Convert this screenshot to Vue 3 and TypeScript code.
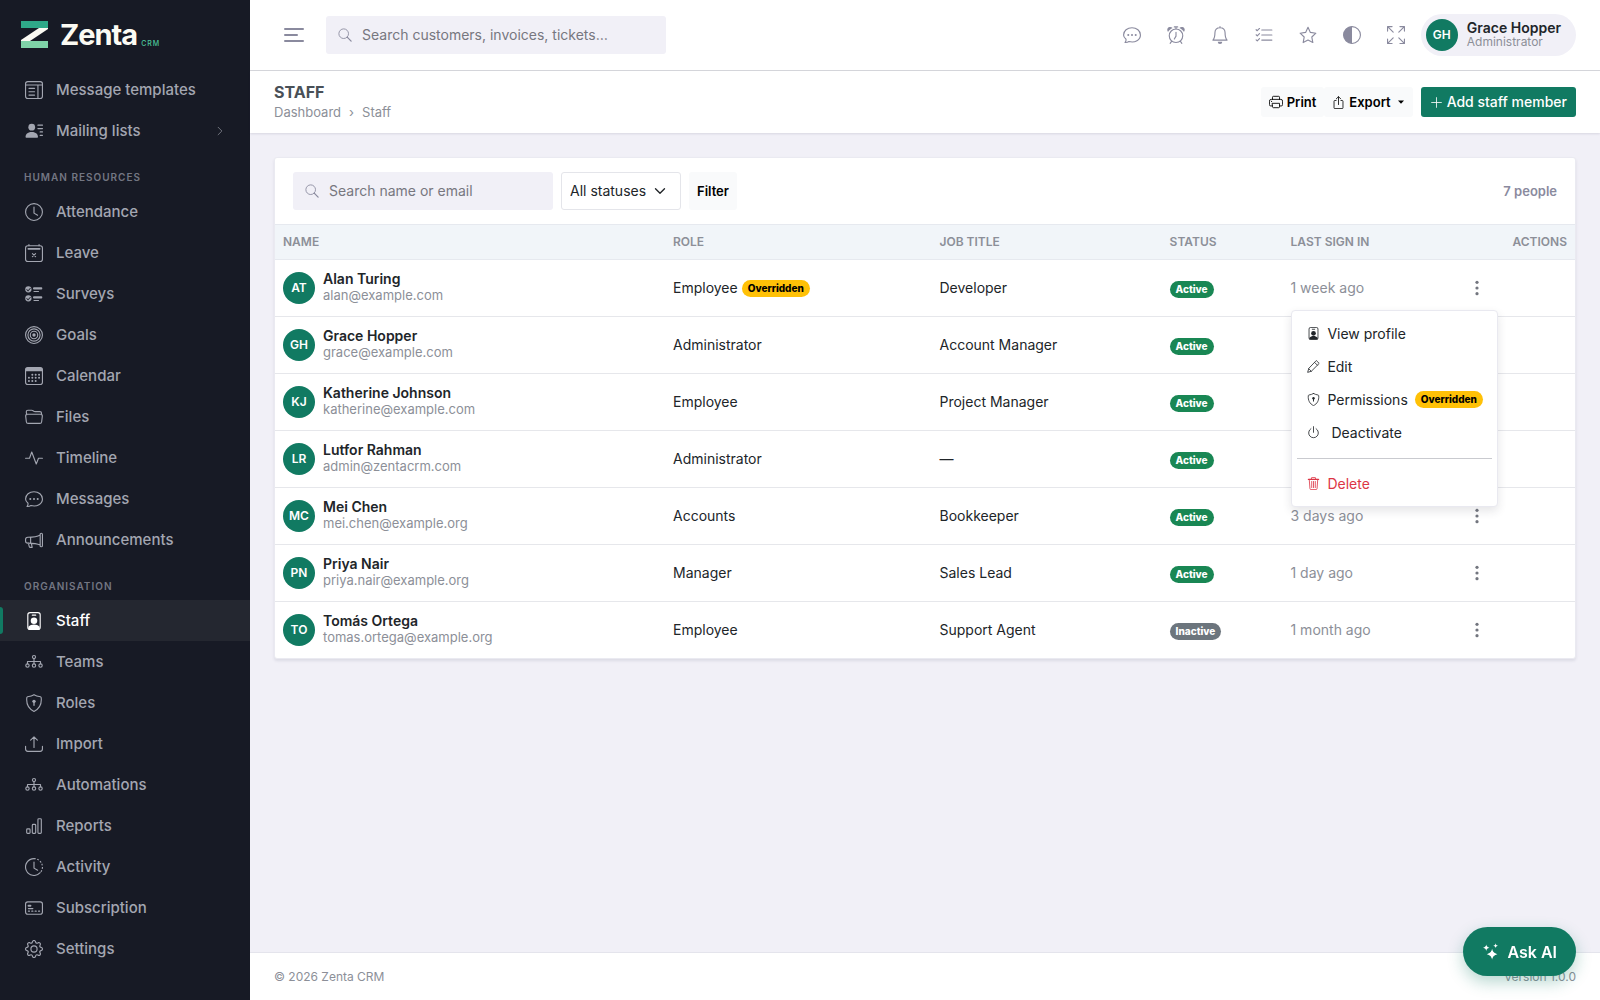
<script setup lang="ts">
import { h, ref } from 'vue'

const line = (d: string, width = 1) =>
  `<path d="${d}" fill="none" stroke="currentColor" stroke-width="${width}" stroke-linecap="round" stroke-linejoin="round"/>`
const fill = (d: string) => `<path d="${d}" fill="currentColor" fill-rule="evenodd"/>`
const ring = (cx: number, cy: number, r: number, width = 1) =>
  `<circle cx="${cx}" cy="${cy}" r="${r}" fill="none" stroke="currentColor" stroke-width="${width}"/>`
const dot = (cx: number, cy: number, r: number) => `<circle cx="${cx}" cy="${cy}" r="${r}" fill="currentColor"/>`
const box = (x: number, y: number, w: number, hgt: number, r: number) =>
  `<rect x="${x}" y="${y}" width="${w}" height="${hgt}" rx="${r}" fill="none" stroke="currentColor"/>`

const chart = ring(8, 3.6, 1.4) + ring(2.2, 11.2, 1.5) + ring(8, 11.2, 1.5) + ring(13.8, 11.2, 1.5) +
  line('M8 5v4.5M2.2 9.5v-2h11.6v2')

const icons: Record<string, string> = {
  template: box(0.5, 0.5, 15, 15, 2) + line('M.5 3.5h15M11.5 3.5v12M3.5 6.5h5M3.5 9.5h5M3.5 12.5h5'),
  mailing: dot(6, 4.6, 3) + fill('M1.5 14c-.8 0-1-.5-1-1 0-2 1.600-4.200 5.500-4.200s5.500 2.200 5.500 4.200c0 .5-.2 1-1 1z') +
    line('M11.500 2.800h4M11.500 5.800h4M13.500 8.800h2M13.500 11.800h2', 1.1),
  clock: ring(8, 8, 7.5) + line('M8 3.500v5.500l3.200 1.900'),
  leave: box(0.5, 1.5, 15, 14, 2) + line('M3.500.5v1M12.500.5v1') + line('M3 4.300h10', 1.6) + line('M6.600 8.500l2.800 2.800M9.400 8.500l-2.800 2.800'),
  surveys: fill('M3 1a2.800 2.800 0 1 0 0 5.600A2.800 2.800 0 0 0 3 1zM1.600 3.500l1.100 1.200 2-2.300.5.500-2.500 2.800-1.600-1.600z') +
    fill('M3 9a2.800 2.800 0 1 0 0 5.600A2.800 2.800 0 0 0 3 9zM1.600 11.500l1.100 1.200 2-2.300.5.500-2.500 2.800-1.600-1.600z') +
    line('M8 3h6.500M8 11h6.500', 1.8) + line('M8 5.800h4M8 13.800h4'),
  goals: ring(8, 8, 7.5) + ring(8, 8, 5.4) + ring(8, 8, 3.3) + dot(8, 8, 1.5),
  calendar: box(0.5, 0.5, 15, 15, 2) + fill('M.5 2.500a2 2 0 0 1 2-2h11a2 2 0 0 1 2 2v1.200H.5z') +
    [[6.500, 6.800], [9.500, 6.800], [12.500, 6.800], [3.500, 9.600], [6.500, 9.600], [9.500, 9.600], [12.500, 9.600], [3.500, 12.400], [6.500, 12.400], [9.500, 12.400]]
      .map(([x, y]) => dot(x, y, 0.9)).join(''),
  folder: line('M1.500 6L1.100 3.500c0-1 .6-1.500 1.500-1.500h3.300c1.400 0 1.700 1.200 3 1.200h4.300c1 0 1.500.7 1.500 1.500L14.500 6M2.200 5.500h11.600c1 0 1.700.7 1.600 1.700l-.6 5c-.1.900-.7 1.500-1.600 1.500H2.800c-.9 0-1.500-.6-1.600-1.500l-.6-5c-.1-1 .6-1.700 1.600-1.700z'),
  pulse: line('M.5 8.200h3.500L6 2.700l4 10.600 2-5.100h3.500'),
  chat: line('M2.700 11.800c.2 1-.2 2-.9 2.900 1.600.1 2.800-.4 3.500-.9 5.400 1.500 10.200-1.500 10.200-5.800 0-3.700-3.400-6.500-7.500-6.500S.5 4.300.5 8c0 1.500.8 2.700 2.200 3.800z') +
    dot(4.7, 8, 0.9) + dot(8, 8, 0.9) + dot(11.3, 8, 0.9),
  megaphone: line('M13.500 2.500v11M13.500 3c0-1.300 2-1.300 2 0v10c0 1.300-2 1.300-2 0M13.500 3.500C11 5 8.500 5.500 2.500 5.600c-1.200 0-2 .8-2 1.900v1.400c0 1.100.8 1.900 2 1.900 6 .1 8.500.6 11 1.700M5 5.600v5M3 10.800l.8 3c.1.500.5.700 1 .7h1.600L5.600 11'),
  badge: `<rect x="2.500" y=".5" width="11" height="15" rx="2" fill="none" stroke="currentColor"/>` + line('M6.500 2.800h3') +
    dot(8, 7.8, 2.9) + fill('M3 15.500v-2.300c1.400-1.600 3-2.200 5-2.200s3.600.6 5 2.200v2.300z'),
  chart,
  shield: line('M8 .6c-1.500.9-3.500 1.500-5.700 1.900-.4.100-.6.400-.7.800C1 9 3.500 13.400 8 15.500c4.500-2.100 7-6.500 6.400-12.200-.1-.4-.3-.7-.7-.8C11.500 2.100 9.500 1.500 8 .6z') +
    dot(8, 6.500, 1.5) + line('M8 7v3', 1.2),
  upload: line('M.5 10v2.500a2 2 0 0 0 2 2h11a2 2 0 0 0 2-2V10M8 11V1.800M5 4.600l3-3 3 3'),
  reports: box(1.500, 10.500, 3, 4, 0.8) + box(6.500, 6.500, 3, 8, 0.8) + box(11.500, 1.500, 3, 13, 0.8),
  history: line('M8 .5a7.500 7.500 0 1 0 5.500 12.600M8 3.500v5.500l3.200 1.900') +
    `<path d="M8 .5a7.500 7.500 0 0 1 5.500 12.600" fill="none" stroke="currentColor" stroke-dasharray="1.600 1.300"/>`,
  card: box(0.5, 2.5, 15, 11, 2) + line('M3 10.800h1M6 10.800h1M9 10.800h1M12 10.800h1M3 8.500h4') + line('M3.200 6h1.600', 1.8),
  gear: fill('M8 4.754a3.246 3.246 0 1 0 0 6.492 3.246 3.246 0 0 0 0-6.492zM5.754 8a2.246 2.246 0 1 1 4.492 0 2.246 2.246 0 0 1-4.492 0z') +
    fill('M9.796 1.343c-.527-1.790-3.065-1.790-3.592 0l-.094.319a.873.873 0 0 1-1.255.520l-.292-.160c-1.640-.892-3.433.902-2.540 2.541l.159.292a.873.873 0 0 1-.520 1.255l-.319.094c-1.790.527-1.790 3.065 0 3.592l.319.094a.873.873 0 0 1 .520 1.255l-.160.292c-.892 1.640.901 3.434 2.541 2.540l.292-.159a.873.873 0 0 1 1.255.520l.094.319c.527 1.790 3.065 1.790 3.592 0l.094-.319a.873.873 0 0 1 1.255-.520l.292.160c1.640.893 3.434-.902 2.540-2.541l-.159-.292a.873.873 0 0 1 .520-1.255l.319-.094c1.790-.527 1.790-3.065 0-3.592l-.319-.094a.873.873 0 0 1-.520-1.255l.160-.292c.893-1.640-.902-3.433-2.541-2.540l-.292.159a.873.873 0 0 1-1.255-.520l-.094-.319zm-2.633.283c.246-.835 1.428-.835 1.674 0l.094.319a1.873 1.873 0 0 0 2.693 1.115l.291-.160c.764-.415 1.600.420 1.184 1.185l-.159.292a1.873 1.873 0 0 0 1.116 2.692l.318.094c.835.246.835 1.428 0 1.674l-.319.094a1.873 1.873 0 0 0-1.115 2.693l.160.291c.415.764-.420 1.600-1.185 1.184l-.291-.159a1.873 1.873 0 0 0-2.693 1.116l-.094.318c-.246.835-1.428.835-1.674 0l-.094-.319a1.873 1.873 0 0 0-2.692-1.115l-.292.160c-.764.415-1.600-.420-1.184-1.185l.159-.291A1.873 1.873 0 0 0 1.945 8.930l-.319-.094c-.835-.246-.835-1.428 0-1.674l.319-.094A1.873 1.873 0 0 0 3.060 4.377l-.160-.292c-.415-.764.420-1.600 1.185-1.184l.292.159a1.873 1.873 0 0 0 2.692-1.115l.094-.319z'),
  search: ring(6.5, 6.5, 5.5) + line('M10.500 10.500l4.500 4.500', 1.4),
  alarm: ring(8, 8.700, 6) + line('M8 5.500v3.500l-1.500 2.600M6.500.8h3M8 .8v1.700M4.200 13.500l-1.400 1.900M11.800 13.500l1.400 1.900') +
    fill('M.9 5.400C-.4 3.500.3 1.300 2.300.9c1.100-.2 2 .2 2.700.9C3.200 2.500 1.700 3.800.9 5.400zM15.100 5.400c1.300-1.900.6-4.100-1.400-4.500-1.100-.2-2 .2-2.700.9 1.800.7 3.300 2 4.100 3.600z'),
  bell: line('M8 1.500c-2.800 0-4.500 2-4.500 4.500 0 3.500-.8 5.500-1.800 6.500h12.600c-1-1-1.800-3-1.800-6.500 0-2.500-1.700-4.500-4.500-4.500zM8 .5v1') + fill('M6 14h4a2 2 0 0 1-4 0z'),
  tasks: line('M6 3.500h9M6 8h9M6 12.500h9M1 3.300l1 .9 2-2M1 7.800l1 .9 2-2M1 12.300l1 .9 2-2'),
  star: line('M8 1.200l2.100 4.500 4.900.7-3.600 3.400.9 4.900L8 12.400l-4.300 2.300.9-4.900L1 6.400l4.900-.7z'),
  contrast: ring(8, 8, 7.5) + fill('M8 .5a7.500 7.500 0 0 0 0 15z'),
  expand: line('M.5 4.500v-4h4M.8.8l4.700 4.700M11.500.5h4v4M15.200.8l-4.700 4.700M.5 11.500v4h4M.8 15.200l4.700-4.700M11.500 15.500h4v-4M15.200 15.200l-4.700-4.700'),
  printer: line('M4 5V2.500a1 1 0 0 1 1-1h6a1 1 0 0 1 1 1V5M4 12.500H2a1.500 1.500 0 0 1-1.500-1.500V7A2 2 0 0 1 2.500 5h11a2 2 0 0 1 2 2v4a1.500 1.500 0 0 1-1.500 1.500h-2M4 9.500h8v4a1 1 0 0 1-1 1H5a1 1 0 0 1-1-1z') + dot(3, 7.3, 0.6),
  share: line('M5 5.500H3.500a1 1 0 0 0-1 1v8a1 1 0 0 0 1 1h9a1 1 0 0 0 1-1v-8a1 1 0 0 0-1-1H11M8 10.500V1M5.300 3.500L8 .8l2.700 2.700'),
  plus: line('M8 2v12M2 8h12'),
  caret: fill('M2 5h12l-6 6.500z'),
  down: line('M2 5l6 6 6-6', 1.8),
  right: line('M5 2l6 6-6 6'),
  dots: dot(8, 2.3, 1.6) + dot(8, 8, 1.6) + dot(8, 13.7, 1.6),
  pencil: line('M11.800 1l3.200 3.200L5.300 13.900.8 15.200l1.300-4.500zM9.600 3.200l3.200 3.200M2.200 10.800l3 3'),
  power: line('M8 .8v7M4.800 3.300a6 6 0 1 0 6.400 0'),
  trash: line('M1.500 3h13M2.800 3l.8 11.200c.1.700.5 1.300 1.200 1.300h6.400c.7 0 1.100-.6 1.200-1.300L13.200 3M5.500 2.800V1.200c0-.4.3-.7.700-.7h3.600c.4 0 .7.300.7.700v1.600M5.800 5.500v7.500M8 5.500v7.500M10.200 5.500v7.500') + line('M2 3h12', 1.6),
  sparkle: fill('M9.500 5.500c.5 3 1.800 4.200 5 5-3.200.8-4.500 2-5 5-.5-3-1.800-4.200-5-5 3.200-.8 4.500-2 5-5zM4 1.500c.3 1.800 1 2.500 3 3-2 .5-2.700 1.200-3 3-.3-1.800-1-2.500-3-3 2-.5 2.700-1.200 3-3zM12.800.2c.2 1.400.8 2 2.400 2.300-1.600.3-2.200.9-2.400 2.300-.2-1.400-.8-2-2.400-2.300 1.600-.3 2.200-.9 2.400-2.300z') +
    line('M9.500 8l.8 1.700 1.700.8-1.700.8-.8 1.700-.8-1.700-1.700-.8 1.700-.8z', 1.5),
}

const Icon = (props: { name: string; size?: number }) =>
  h('svg', {
    viewBox: '0 0 16 16',
    width: props.size ?? 18,
    height: props.size ?? 18,
    'aria-hidden': 'true',
    innerHTML: icons[props.name],
  })
Icon.props = ['name', 'size']

interface NavItem { label: string; icon: string; more?: boolean }
interface NavGroup { title: string; items: NavItem[] }

const nav: NavGroup[] = [
  {
    title: '',
    items: [
      { label: 'Message templates', icon: 'template' },
      { label: 'Mailing lists', icon: 'mailing', more: true },
    ],
  },
  {
    title: 'Human resources',
    items: [
      { label: 'Attendance', icon: 'clock' },
      { label: 'Leave', icon: 'leave' },
      { label: 'Surveys', icon: 'surveys' },
      { label: 'Goals', icon: 'goals' },
      { label: 'Calendar', icon: 'calendar' },
      { label: 'Files', icon: 'folder' },
      { label: 'Timeline', icon: 'pulse' },
      { label: 'Messages', icon: 'chat' },
      { label: 'Announcements', icon: 'megaphone' },
    ],
  },
  {
    title: 'Organisation',
    items: [
      { label: 'Staff', icon: 'badge' },
      { label: 'Teams', icon: 'chart' },
      { label: 'Roles', icon: 'shield' },
      { label: 'Import', icon: 'upload' },
      { label: 'Automations', icon: 'chart' },
      { label: 'Reports', icon: 'reports' },
      { label: 'Activity', icon: 'history' },
      { label: 'Subscription', icon: 'card' },
      { label: 'Settings', icon: 'gear' },
    ],
  },
]

const tools = [
  { icon: 'chat', label: 'Messages' },
  { icon: 'alarm', label: 'Reminders' },
  { icon: 'bell', label: 'Notifications' },
  { icon: 'tasks', label: 'Tasks' },
  { icon: 'star', label: 'Favourites' },
  { icon: 'contrast', label: 'Theme' },
  { icon: 'expand', label: 'Full screen' },
]

interface Person {
  initials: string
  name: string
  email: string
  role: string
  overridden?: boolean
  job: string
  active: boolean
  seen: string
}

const people: Person[] = [
  { initials: 'AT', name: 'Alan Turing', email: 'alan@example.com', role: 'Employee', overridden: true, job: 'Developer', active: true, seen: '1 week ago' },
  { initials: 'GH', name: 'Grace Hopper', email: 'grace@example.com', role: 'Administrator', job: 'Account Manager', active: true, seen: '' },
  { initials: 'KJ', name: 'Katherine Johnson', email: 'katherine@example.com', role: 'Employee', job: 'Project Manager', active: true, seen: '' },
  { initials: 'LR', name: 'Lutfor Rahman', email: 'admin@zentacrm.com', role: 'Administrator', job: '—', active: true, seen: '' },
  { initials: 'MC', name: 'Mei Chen', email: 'mei.chen@example.org', role: 'Accounts', job: 'Bookkeeper', active: true, seen: '3 days ago' },
  { initials: 'PN', name: 'Priya Nair', email: 'priya.nair@example.org', role: 'Manager', job: 'Sales Lead', active: true, seen: '1 day ago' },
  { initials: 'TO', name: 'Tomás Ortega', email: 'tomas.ortega@example.org', role: 'Employee', job: 'Support Agent', active: false, seen: '1 month ago' },
]

const openMenu = ref(0)
const toggleMenu = (row: number) => {
  openMenu.value = openMenu.value === row ? -1 : row
}
</script>

<template>
  <div class="app">
    <aside class="sidebar">
      <a class="brand" href="#">
        <svg class="mark" viewBox="0 0 27 27" width="27" height="27" aria-hidden="true">
          <path d="M0 0h27v7H0z" fill="#2fa888" />
          <path d="M0 20h27v7H0z" fill="#7fd3a8" />
          <path d="M18 7h9v1L9 20H0v-1z" fill="#fbfaf3" />
        </svg>
        <span class="word">Zenta</span>
        <span class="crm">CRM</span>
      </a>
      <nav aria-label="Main">
        <section v-for="group in nav" :key="group.title">
          <h2 v-if="group.title" class="nav-title">{{ group.title }}</h2>
          <a
            v-for="item in group.items"
            :key="item.label"
            href="#"
            class="nav-item"
            :class="{ current: item.label === 'Staff' }"
          >
            <Icon :name="item.icon" />
            <span class="nav-label">{{ item.label }}</span>
            <Icon v-if="item.more" name="right" :size="10" />
          </a>
        </section>
      </nav>
    </aside>

    <div class="main">
      <header class="topbar">
        <button class="burger" type="button" aria-label="Toggle menu"><i /><i /><i /></button>
        <label class="search global">
          <Icon name="search" :size="14" />
          <input type="search" placeholder="Search customers, invoices, tickets…" aria-label="Search everything" />
        </label>
        <div class="tools">
          <button v-for="tool in tools" :key="tool.icon" type="button" :aria-label="tool.label">
            <Icon :name="tool.icon" />
          </button>
        </div>
        <button class="profile" type="button">
          <span class="avatar">GH</span>
          <span class="who">
            <span class="who-name">Grace Hopper</span>
            <span class="who-role">Administrator</span>
          </span>
        </button>
      </header>

      <div class="page-head">
        <div class="heading">
          <h1>Staff</h1>
          <nav class="crumbs" aria-label="Breadcrumb">
            <a href="#">Dashboard</a><span>›</span><span>Staff</span>
          </nav>
        </div>
        <div class="actions">
          <div class="btn-group">
            <button class="btn light" type="button"><Icon name="printer" :size="14" />Print</button>
            <button class="btn light" type="button">
              <Icon name="share" :size="13" />Export<Icon class="caret" name="caret" :size="8" />
            </button>
          </div>
          <button class="btn primary" type="button"><Icon name="plus" :size="13" />Add staff member</button>
        </div>
      </div>

      <main class="content">
        <div class="card">
          <form class="filters" @submit.prevent>
            <label class="search local">
              <Icon name="search" :size="14" />
              <input type="search" placeholder="Search name or email" aria-label="Search name or email" />
            </label>
            <div class="select">
              <select aria-label="Status">
                <option>All statuses</option>
                <option>Active</option>
                <option>Inactive</option>
              </select>
              <Icon name="down" :size="12" />
            </div>
            <button class="btn light tall" type="submit">Filter</button>
            <span class="count">7 people</span>
          </form>
          <table>
            <colgroup>
              <col class="c-name" /><col class="c-role" /><col class="c-job" />
              <col class="c-status" /><col class="c-seen" /><col />
            </colgroup>
            <thead>
              <tr>
                <th>Name</th>
                <th>Role</th>
                <th>Job title</th>
                <th>Status</th>
                <th>Last sign in</th>
                <th class="end">Actions</th>
              </tr>
            </thead>
            <tbody>
              <tr v-for="(person, row) in people" :key="person.email">
                <td>
                  <div class="person">
                    <span class="avatar">{{ person.initials }}</span>
                    <div class="contact">
                      <a class="name" href="#">{{ person.name }}</a>
                      <div class="email">{{ person.email }}</div>
                    </div>
                  </div>
                </td>
                <td>
                  <div class="role">
                    {{ person.role }}<span v-if="person.overridden" class="pill warn">Overridden</span>
                  </div>
                </td>
                <td>{{ person.job }}</td>
                <td><span class="pill" :class="person.active ? 'ok' : 'off'">{{ person.active ? 'Active' : 'Inactive' }}</span></td>
                <td class="seen">{{ person.seen }}</td>
                <td>
                  <div class="row-menu">
                    <button class="kebab" type="button" :aria-label="`Actions for ${person.name}`" @click="toggleMenu(row)">
                      <Icon name="dots" :size="16" />
                    </button>
                    <div v-if="openMenu === row" class="menu">
                      <a href="#"><Icon name="badge" :size="13" />View profile</a>
                      <a href="#"><Icon name="pencil" :size="13" />Edit</a>
                      <a href="#"><Icon name="shield" :size="13" />Permissions<span v-if="person.overridden" class="pill warn">Overridden</span></a>
                      <button class="power" type="button"><Icon name="power" :size="13" />Deactivate</button>
                      <hr />
                      <button class="danger" type="button"><Icon name="trash" :size="13" />Delete</button>
                    </div>
                  </div>
                </td>
              </tr>
            </tbody>
          </table>
        </div>
      </main>

      <footer class="footer">
        <span>© 2026 Zenta CRM</span>
        <span>Version 1.0.0</span>
      </footer>
    </div>

    <button class="ask" type="button"><Icon name="sparkle" :size="17" />Ask AI</button>
  </div>
</template>

<style>
body {
  margin: 0;
  background: #f1f0f7;
}
</style>

<style scoped>
.app {
  display: flex;
  min-height: 100vh;
  font-family: Inter, "Noto Sans", sans-serif;
  font-size: 14px;
  line-height: 20px;
  color: #212529;
  background: #f1f0f7;
}
.app * {
  box-sizing: border-box;
}
button,
input,
select {
  font: inherit;
  color: inherit;
  border: 0;
  background: none;
  padding: 0;
  margin: 0;
}
button {
  cursor: pointer;
}
a {
  color: inherit;
  text-decoration: none;
}
svg {
  flex: none;
  display: block;
}

/* Sidebar */
.sidebar {
  flex: none;
  width: 250px;
  background: #171a25;
  color: #a3a6b1;
}
.brand {
  display: flex;
  align-items: center;
  height: 69px;
  padding-left: 21px;
  color: #fbfaf3;
}
.word {
  margin-left: 12px;
  font-size: 29px;
  font-weight: 700;
  line-height: 40px;
  letter-spacing: -1px;
}
.crm {
  align-self: flex-end;
  margin: 0 0 15px 4px;
  font-size: 7px;
  font-weight: 500;
  letter-spacing: 1px;
  color: #4cc59a;
}
.nav-title {
  display: flex;
  align-items: center;
  height: 40px;
  margin: 0;
  padding: 12px 24px 0;
  font-size: 10px;
  font-weight: 600;
  line-height: 16px;
  letter-spacing: 1px;
  text-transform: uppercase;
  color: #737682;
}
.nav-item {
  position: relative;
  display: flex;
  align-items: center;
  height: 41px;
  padding: 0 25px;
  font-size: 15px;
  font-weight: 500;
}
.nav-label {
  flex: 1;
  margin-left: 13px;
}
.nav-item.current {
  background: #242730;
  color: #fff;
}
.nav-item.current::before {
  content: "";
  position: absolute;
  left: 0;
  top: 7px;
  bottom: 7px;
  width: 3px;
  border-radius: 0 3px 3px 0;
  background: #117a62;
}

/* Top bar */
.main {
  flex: 1;
  min-width: 0;
  display: flex;
  flex-direction: column;
}
.topbar {
  display: flex;
  align-items: center;
  height: 71px;
  padding: 0 24px 0 34px;
  background: #fff;
  border-bottom: 1px solid #d6d7dc;
}
.burger {
  display: flex;
  flex-direction: column;
  gap: 4px;
  width: 20px;
}
.burger i {
  height: 2px;
  border-radius: 1px;
  background: #8a8a9e;
}
.burger i:nth-child(2) {
  width: 14px;
}
.search {
  display: flex;
  align-items: center;
  gap: 10px;
  height: 38px;
  padding: 0 12px;
  border-radius: 3px;
  background: #f1f0f7;
  color: #8a8a9e;
}
.search input {
  flex: 1;
  min-width: 0;
  height: 20px;
  outline: 0;
  color: #212529;
}
.search input::placeholder {
  color: #77777f;
  opacity: 1;
}
.global {
  width: 340px;
  margin-left: 22px;
}
.tools {
  display: flex;
  margin-left: auto;
  color: #8a8a9e;
}
.tools button {
  display: flex;
  justify-content: center;
  width: 44px;
}
.profile {
  display: flex;
  align-items: center;
  gap: 9px;
  height: 42px;
  margin-left: 3px;
  padding: 0 15px 0 5px;
  border-radius: 21px;
  background: #f1f0f7;
  text-align: left;
}
.who {
  display: flex;
  flex-direction: column;
  padding-bottom: 2px;
}
.who-name {
  font-size: 14px;
  font-weight: 600;
  line-height: 15px;
}
.who-role {
  font-size: 12px;
  line-height: 14px;
  color: #8c8f98;
}
.avatar {
  flex: none;
  display: flex;
  align-items: center;
  justify-content: center;
  width: 32px;
  height: 32px;
  border-radius: 50%;
  background: #117a62;
  color: #fff;
  font-size: 12px;
  font-weight: 600;
}

/* Page heading */
.page-head {
  display: flex;
  align-items: center;
  justify-content: space-between;
  height: 62px;
  padding: 0 24px;
  background: #fff;
  box-shadow: 0 1px 2px rgba(40, 40, 80, 0.12);
}
.heading {
  padding-bottom: 3px;
}
h1 {
  margin: 0;
  font-size: 16px;
  font-weight: 700;
  line-height: 22px;
  text-transform: uppercase;
  color: #495057;
}
.crumbs {
  display: flex;
  gap: 8px;
  font-size: 13px;
  line-height: 18px;
  color: #8c8f98;
}
.actions,
.btn-group {
  display: flex;
}
.actions {
  gap: 8px;
}
.btn {
  display: flex;
  align-items: center;
  gap: 4px;
  height: 30px;
  padding: 0 9px;
  border-radius: 3px;
  font-weight: 500;
  white-space: nowrap;
}
.light {
  padding: 0 8px;
  background: #f9fafb;
  color: #000;
  font-size: 13px;
  font-weight: 600;
}
.primary {
  background: #117a62;
  color: #fff;
}
.caret {
  margin-left: 2px;
}
.tall {
  height: 38px;
}

/* Card */
.content {
  flex: 1;
  padding: 24px;
}
.card {
  background: #fff;
  border: 1px solid #eaeaf1;
  border-radius: 3px;
  box-shadow: 0 2px 3px rgba(40, 40, 80, 0.1);
}
.filters {
  display: flex;
  align-items: center;
  gap: 8px;
  height: 66px;
  padding: 0 18px;
}
.local {
  width: 260px;
}
.select {
  position: relative;
  width: 120px;
  height: 38px;
}
.select select {
  appearance: none;
  width: 100%;
  height: 100%;
  padding: 0 8px;
  border: 1px solid #e4e5ea;
  border-radius: 3px;
  background: #fff;
}
.select svg {
  position: absolute;
  right: 15px;
  top: 13px;
  pointer-events: none;
}
.count {
  margin-left: auto;
  font-size: 13px;
  font-weight: 600;
  color: #8a8a9e;
}
table {
  width: 100%;
  table-layout: fixed;
  border-collapse: separate;
  border-spacing: 0;
}
.c-name {
  width: 30%;
}
.c-role {
  width: 20.5%;
}
.c-job {
  width: 17.7%;
}
.c-status {
  width: 9.3%;
}
.c-seen {
  width: 13.3%;
}
th {
  height: 36px;
  padding: 0 8px;
  border-top: 1px solid #e6e9ef;
  border-bottom: 1px solid #e6e9ef;
  background: #f1f5f9;
  font-size: 12px;
  font-weight: 600;
  text-align: left;
  text-transform: uppercase;
  color: #8c8f98;
}
th.end {
  text-align: right;
}
td {
  height: 57px;
  padding: 0 8px;
  border-bottom: 1px solid #e6e7eb;
}
tbody tr:last-child td {
  height: 56px;
  border-bottom: 0;
}
.person {
  display: flex;
  align-items: center;
  gap: 8px;
}
.contact {
  padding-bottom: 2px;
}
.name {
  display: block;
  font-weight: 600;
  line-height: 16px;
}
.email {
  font-size: 13px;
  line-height: 16px;
  color: #8c8f98;
}
.role {
  display: flex;
  align-items: center;
  gap: 4px;
}
.pill {
  display: inline-flex;
  align-items: center;
  height: 17px;
  padding: 0 6px;
  border-radius: 9px;
  font-size: 10px;
  font-weight: 800;
  line-height: 17px;
  vertical-align: middle;
}
.ok {
  background: #198754;
  color: #fff;
}
.off {
  background: #6c757d;
  color: #fff;
}
.warn {
  background: #ffc107;
  color: #000;
}
.seen {
  color: #8c8f98;
}
.row-menu {
  position: relative;
  width: 28px;
}
.kebab {
  display: flex;
  align-items: center;
  justify-content: center;
  width: 28px;
  height: 28px;
  color: #73767f;
}
.menu {
  position: absolute;
  z-index: 2;
  top: 36px;
  right: -7px;
  width: 207px;
  padding: 6px 5px;
  border: 1px solid #e9e9f0;
  border-radius: 4px;
  background: #fff;
  box-shadow: 0 4px 10px rgba(40, 40, 60, 0.12);
}
.menu a,
.menu button {
  display: flex;
  align-items: center;
  gap: 7px;
  width: 100%;
  height: 33px;
  padding: 0 10px;
}
.menu .power {
  gap: 11px;
}
.menu .danger {
  color: #dc3545;
}
.menu hr {
  height: 1px;
  margin: 9px 0 8px;
  border: 0;
  background: #c9cacf;
}

/* Footer */
.footer {
  display: flex;
  align-items: center;
  justify-content: space-between;
  height: 48px;
  padding: 0 24px;
  border-top: 1px solid #e4e4ec;
  background: #fff;
  font-size: 12px;
  color: #8c8f98;
}
.ask {
  position: fixed;
  right: 24px;
  bottom: 24px;
  display: flex;
  align-items: center;
  gap: 8px;
  height: 49px;
  padding: 0 19px;
  border-radius: 25px;
  background: #117a62;
  box-shadow: 0 6px 16px rgba(17, 122, 98, 0.3);
  color: #fff;
  font-size: 16px;
  font-weight: 600;
}
</style>
